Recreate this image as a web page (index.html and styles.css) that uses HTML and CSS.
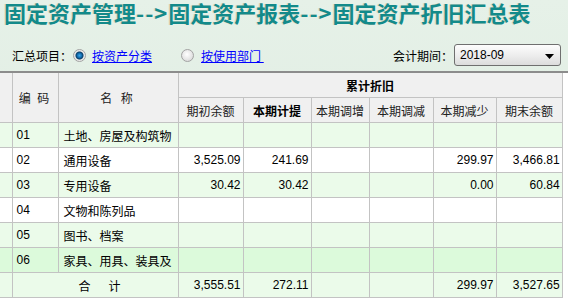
FILE: index.html
```html
<!DOCTYPE html>
<html lang="zh-CN">
<head>
  <meta charset="UTF-8">
  <title>固定资产折旧汇总表</title>
  <link rel="stylesheet" href="styles.css">
</head>
<body>
  <h1 class="page-title">固定资产管理<span class="sep">--&gt;</span>固定资产报表<span class="sep">--&gt;</span>固定资产折旧汇总表</h1>

  <div class="toolbar">
    <span class="label">汇总项目：</span>
    <input type="radio" class="radio" name="group" checked>
    <a href="#" class="link first-link">按资产分类</a>
    <input type="radio" class="radio second-radio" name="group">
    <a href="#" class="link">按使用部门&nbsp;</a>
    <span class="spacer"></span>
    <span class="label">会计期间：</span>
    <div class="period-select">
      <span>2018-09</span>
      <svg width="9" height="5" viewBox="0 0 9 5"><polygon points="0,0 9,0 4.5,5" fill="#000"/></svg>
    </div>
  </div>

  <div class="grid-wrap">
    <table class="grid">
      <colgroup>
        <col style="width:12px"><col style="width:46px"><col style="width:120px">
        <col style="width:65px"><col style="width:68px"><col style="width:58px">
        <col style="width:64px"><col style="width:63px"><col style="width:66px">
      </colgroup>
      <thead>
        <tr>
          <th rowspan="2"></th>
          <th rowspan="2" class="spaced">编 码</th>
          <th rowspan="2" class="spaced wide">名 称</th>
          <th colspan="6" class="strong">累计折旧</th>
        </tr>
        <tr>
          <th>期初余额</th>
          <th class="strong">本期计提</th>
          <th>本期调增</th>
          <th>本期调减</th>
          <th>本期减少</th>
          <th>期末余额</th>
        </tr>
      </thead>
      <tbody>
        <tr class="alt"><td></td><td class="code">01</td><td class="name">土地、房屋及构筑物</td><td></td><td></td><td></td><td></td><td></td><td></td></tr>
        <tr><td></td><td class="code">02</td><td class="name">通用设备</td><td class="num">3,525.09</td><td class="num">241.69</td><td></td><td></td><td class="num">299.97</td><td class="num">3,466.81</td></tr>
        <tr class="alt"><td></td><td class="code">03</td><td class="name">专用设备</td><td class="num">30.42</td><td class="num">30.42</td><td></td><td></td><td class="num">0.00</td><td class="num">60.84</td></tr>
        <tr><td></td><td class="code">04</td><td class="name">文物和陈列品</td><td></td><td></td><td></td><td></td><td></td><td></td></tr>
        <tr class="alt"><td></td><td class="code">05</td><td class="name">图书、档案</td><td></td><td></td><td></td><td></td><td></td><td></td></tr>
        <tr class="hot"><td></td><td class="code">06</td><td class="name">家具、用具、装具及</td><td></td><td></td><td></td><td></td><td></td><td></td></tr>
        <tr class="alt total"><td></td><td colspan="2" class="total-label">合　计</td><td class="num">3,555.51</td><td class="num">272.11</td><td></td><td></td><td class="num">299.97</td><td class="num">3,527.65</td></tr>
      </tbody>
    </table>
  </div>
</body>
</html>
```

FILE: styles.css
```css
html, body { margin: 0; padding: 0; }
body {
  width: 568px; height: 304px; overflow: hidden;
  background: linear-gradient(180deg, #e6f1e8 0%, #dcebdf 100%);
  font-family: "Liberation Sans", "Noto Sans CJK SC", sans-serif;
  font-size: 12px; color: #000;
}
.page-title {
  margin: 0; padding: 0 0 4px 4px;
  height: 24px; line-height: 24px;
  font-family: "Noto Sans CJK SC", sans-serif;
  font-size: 22px; font-weight: bold; color: #138a8a;
  white-space: nowrap;
  text-shadow: -1px 0 0 #e9dcc0;
}
.page-title .sep { letter-spacing: 1px; }

/* filter bar */
.toolbar {
  display: flex; align-items: center;
  height: 22px; margin: 16px 0 5px; padding: 0 7px 0 12px;
}
.label { font-family: "Noto Sans CJK SC", sans-serif; }
.spacer { flex: 1; }
.radio {
  appearance: none; -webkit-appearance: none;
  width: 13px; height: 13px; margin: 0 0 0 1px; box-sizing: border-box;
  border-radius: 50%; border: 1px solid #a3a3a3;
  background: radial-gradient(circle at 45% 40%, #ffffff 0%, #e4e4e4 60%, #cfcfcf 100%);
}
.radio:checked {
  background: radial-gradient(circle at 50% 50%, #3fa6e6 0, #1574b8 2px, #0b3f6a 3.5px, #e6e6e6 4.5px, #f7f7f7 100%);
}
.second-radio { margin-left: 29px; }
.link {
  margin-left: 6px; color: #0000ff; text-decoration: underline;
  font-family: "Noto Sans CJK SC", sans-serif;
}
.second-radio + .link { margin-left: 7px; }
.period-select {
  width: 107px; height: 22px; box-sizing: border-box; margin-left: 1px;
  border: 1px solid #6f6f6f; border-radius: 3px;
  background: linear-gradient(180deg, #fdfdfd 0%, #eeeeee 50%, #dcdcdc 100%);
  display: flex; align-items: center; justify-content: space-between;
  padding: 0 6px 0 5px;
}
.period-select svg { margin-top: 3px; }

/* grid */
.grid-wrap {
  background: #fff; border-top: 2px solid #8c8c8c;
  height: 233px;
}
.grid {
  border-collapse: collapse; table-layout: fixed; width: 562px;
}
.grid th, .grid td {
  border: 1px solid #c3c3c3; height: 24px; padding: 0;
  white-space: nowrap; overflow: hidden;
}
.grid tr > :first-child { border-left: 0; }
.grid thead tr:first-child th { border-top: 0; }
.grid th {
  background: #f0f0f0; color: #222; font-weight: normal;
  font-family: "Noto Sans CJK SC", sans-serif;
}
.grid th.strong { font-weight: bold; color: #000; }
.grid th.spaced { letter-spacing: 2px; }
.grid th.wide { letter-spacing: 3px; }
.grid tbody tr { background: #fff; }
.grid tbody tr.alt { background: #ebfbea; }
.grid tbody tr.hot { background: #dcfadb; }
.code { padding-left: 4px !important; }
.name { padding-left: 5px !important; }
.num { text-align: right; padding-right: 2px !important; }
.total-label { text-align: center; letter-spacing: 3px; padding-left: 12px !important; }
```
